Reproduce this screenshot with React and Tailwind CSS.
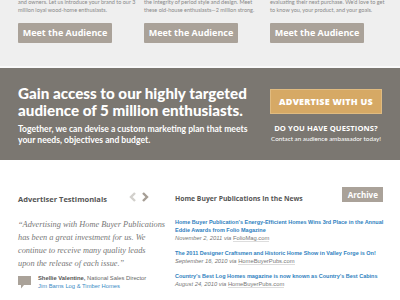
import React from 'react';

const cols = [
  ['and owners. Let us introduce your brand to our 3', 'million loyal wood-home enthusiasts.'],
  ['the integrity of period style and design. Meet', 'these old-house enthusiasts—2 million strong.'],
  ['evaluating their next purchase. We\u2019d love to get', 'to know you, your product, and your goals.'],
];

const news = [
  {
    title: ['Home Buyer Publication\u2019s Energy-Efficient Homes Wins 3rd Place in the Annual', 'Eddie Awards from Folio Magazine'],
    date: 'November 2, 2011',
    src: 'FolioMag.com',
  },
  {
    title: ['The 2011 Designer Craftsmen and Historic Home Show in Valley Forge is On!'],
    date: 'September 16, 2010',
    src: 'HomeBuyerPubs.com',
  },
  {
    title: ['Country\u2019s Best Log Homes magazine is now known as Country\u2019s Best Cabins'],
    date: 'August 24, 2010',
    src: 'HomeBuyerPubs.com',
  },
];

export default function App() {
  return (
    <div className="w-[400px] h-[300px] overflow-hidden bg-white font-['Liberation_Sans',sans-serif]">
      {/* top: audience columns */}
      <div className="h-[66px] bg-[#efefef] px-[18px] flex gap-[32px] overflow-hidden">
        {cols.map((c, i) => (
          <div key={i} className="w-[94px] shrink-0">
            <p className="-mt-[2px] w-[120px] text-[5.5px] leading-[8px] text-[#888] font-['Lato',sans-serif] whitespace-nowrap">
              {c[0]}<br />{c[1]}
            </p>
            <button className="mt-[9px] w-[94px] h-[20px] bg-[#aaa299] rounded-[1px] text-white text-[9px] font-bold font-['Open_Sans',sans-serif]">
              Meet the Audience
            </button>
          </div>
        ))}
      </div>
      <div className="h-[2px] bg-[#fafafa]" />

      {/* band */}
      <div className="h-[92px] bg-[#7b7771] px-[18px] flex text-white font-['Lato',sans-serif]">
        <div className="pt-[17px] w-[240px]">
          <h2 className="text-[15.2px] leading-[17px] font-black whitespace-nowrap">
            Gain access to our highly targeted<br />audience of 5 million enthusiasts.
          </h2>
          <p className="mt-[5px] text-[8.6px] leading-[11px] font-bold whitespace-nowrap">
            Together, we can devise a custom marketing plan that meets<br />your needs, objectives and budget.
          </p>
        </div>
        <div className="ml-auto pt-[21px] flex flex-col items-center w-[112px]">
          <button className="w-[112px] h-[25px] bg-[#d6a965] border border-[#e0bb80] text-[9px] font-extrabold font-['Open_Sans',sans-serif] tracking-[0.2px]">
            ADVERTISE WITH US
          </button>
          <div className="mt-[9px] text-[7.6px] leading-[10px] font-bold font-['Open_Sans',sans-serif] tracking-[0.1px] whitespace-nowrap">DO YOU HAVE QUESTIONS?</div>
          <div className="mt-[2px] text-[6.3px] leading-[8px] whitespace-nowrap">Contact an audience ambassador today!</div>
        </div>
      </div>

      {/* bottom */}
      <div className="flex px-[18px]">
        <div className="w-[131px] shrink-0 pt-[34px]">
          <div className="flex items-center justify-between">
            <h3 className="text-[7.5px] font-bold text-[#555] font-['Open_Sans',sans-serif]">Advertiser Testimonials</h3>
            <div className="flex gap-[4px] -mt-[5px]">
              <svg width="8" height="10" viewBox="0 0 8 10"><path d="M6 1L2 5l4 4" fill="none" stroke="#d2d0cc" strokeWidth="2.4" /></svg>
              <svg width="8" height="10" viewBox="0 0 8 10"><path d="M2 1l4 4-4 4" fill="none" stroke="#a69e95" strokeWidth="2.4" /></svg>
            </div>
          </div>
          <p className="mt-[13px] w-[140px] text-[8.3px] leading-[13px] italic text-[#777] font-['Liberation_Serif',serif] whitespace-nowrap">
            {'\u201cAdvertising with Home Buyer Publications'}<br />
            has been a great investment for us. We<br />
            continue to receive many quality leads<br />
            {'upon the release of each issue.\u201d'}
          </p>
          <div className="mt-[5px] flex gap-[7px]">
            <svg width="13" height="13" viewBox="0 0 13 13" className="mt-[1px]">
              <path d="M0 0h13v9H6l-3 3.5V9H0z" fill="#aaa299" />
            </svg>
            <div className="text-[5.8px] leading-[7.5px]">
              <div className="text-[#666]"><span className="font-bold text-[#555]">Shellie Valentine,</span> National Sales Director</div>
              <div className="text-[#3a8ac4]">Jim Barns Log &amp; Timber Homes</div>
            </div>
          </div>
        </div>

        <div className="flex-1 ml-[26px] pt-[27px]">
          <div className="flex items-end justify-between">
            <h3 className="mb-[-2px] text-[6.8px] font-bold text-[#555] font-['Open_Sans',sans-serif]">Home Buyer Publications In the News</h3>
            <span className="w-[41px] h-[15px] bg-[#aaa299] text-white text-[8px] font-bold font-['Open_Sans',sans-serif] flex items-center justify-center">Archive</span>
          </div>
          <div className="mt-[16px] flex flex-col gap-[7px]">
            {news.map((n, i) => (
              <div key={i}>
                {n.title.map((t, j) => (
                  <div key={j} className="text-[5.5px] leading-[8px] font-bold text-[#2f7fc0] whitespace-nowrap">{t}</div>
                ))}
                <div className="text-[5.8px] leading-[8px] italic text-[#777]">
                  {n.date} via <span className="not-italic text-[#777] border-b border-[#ddd]">{n.src}</span>
                </div>
              </div>
            ))}
          </div>
        </div>
      </div>
    </div>
  );
}
